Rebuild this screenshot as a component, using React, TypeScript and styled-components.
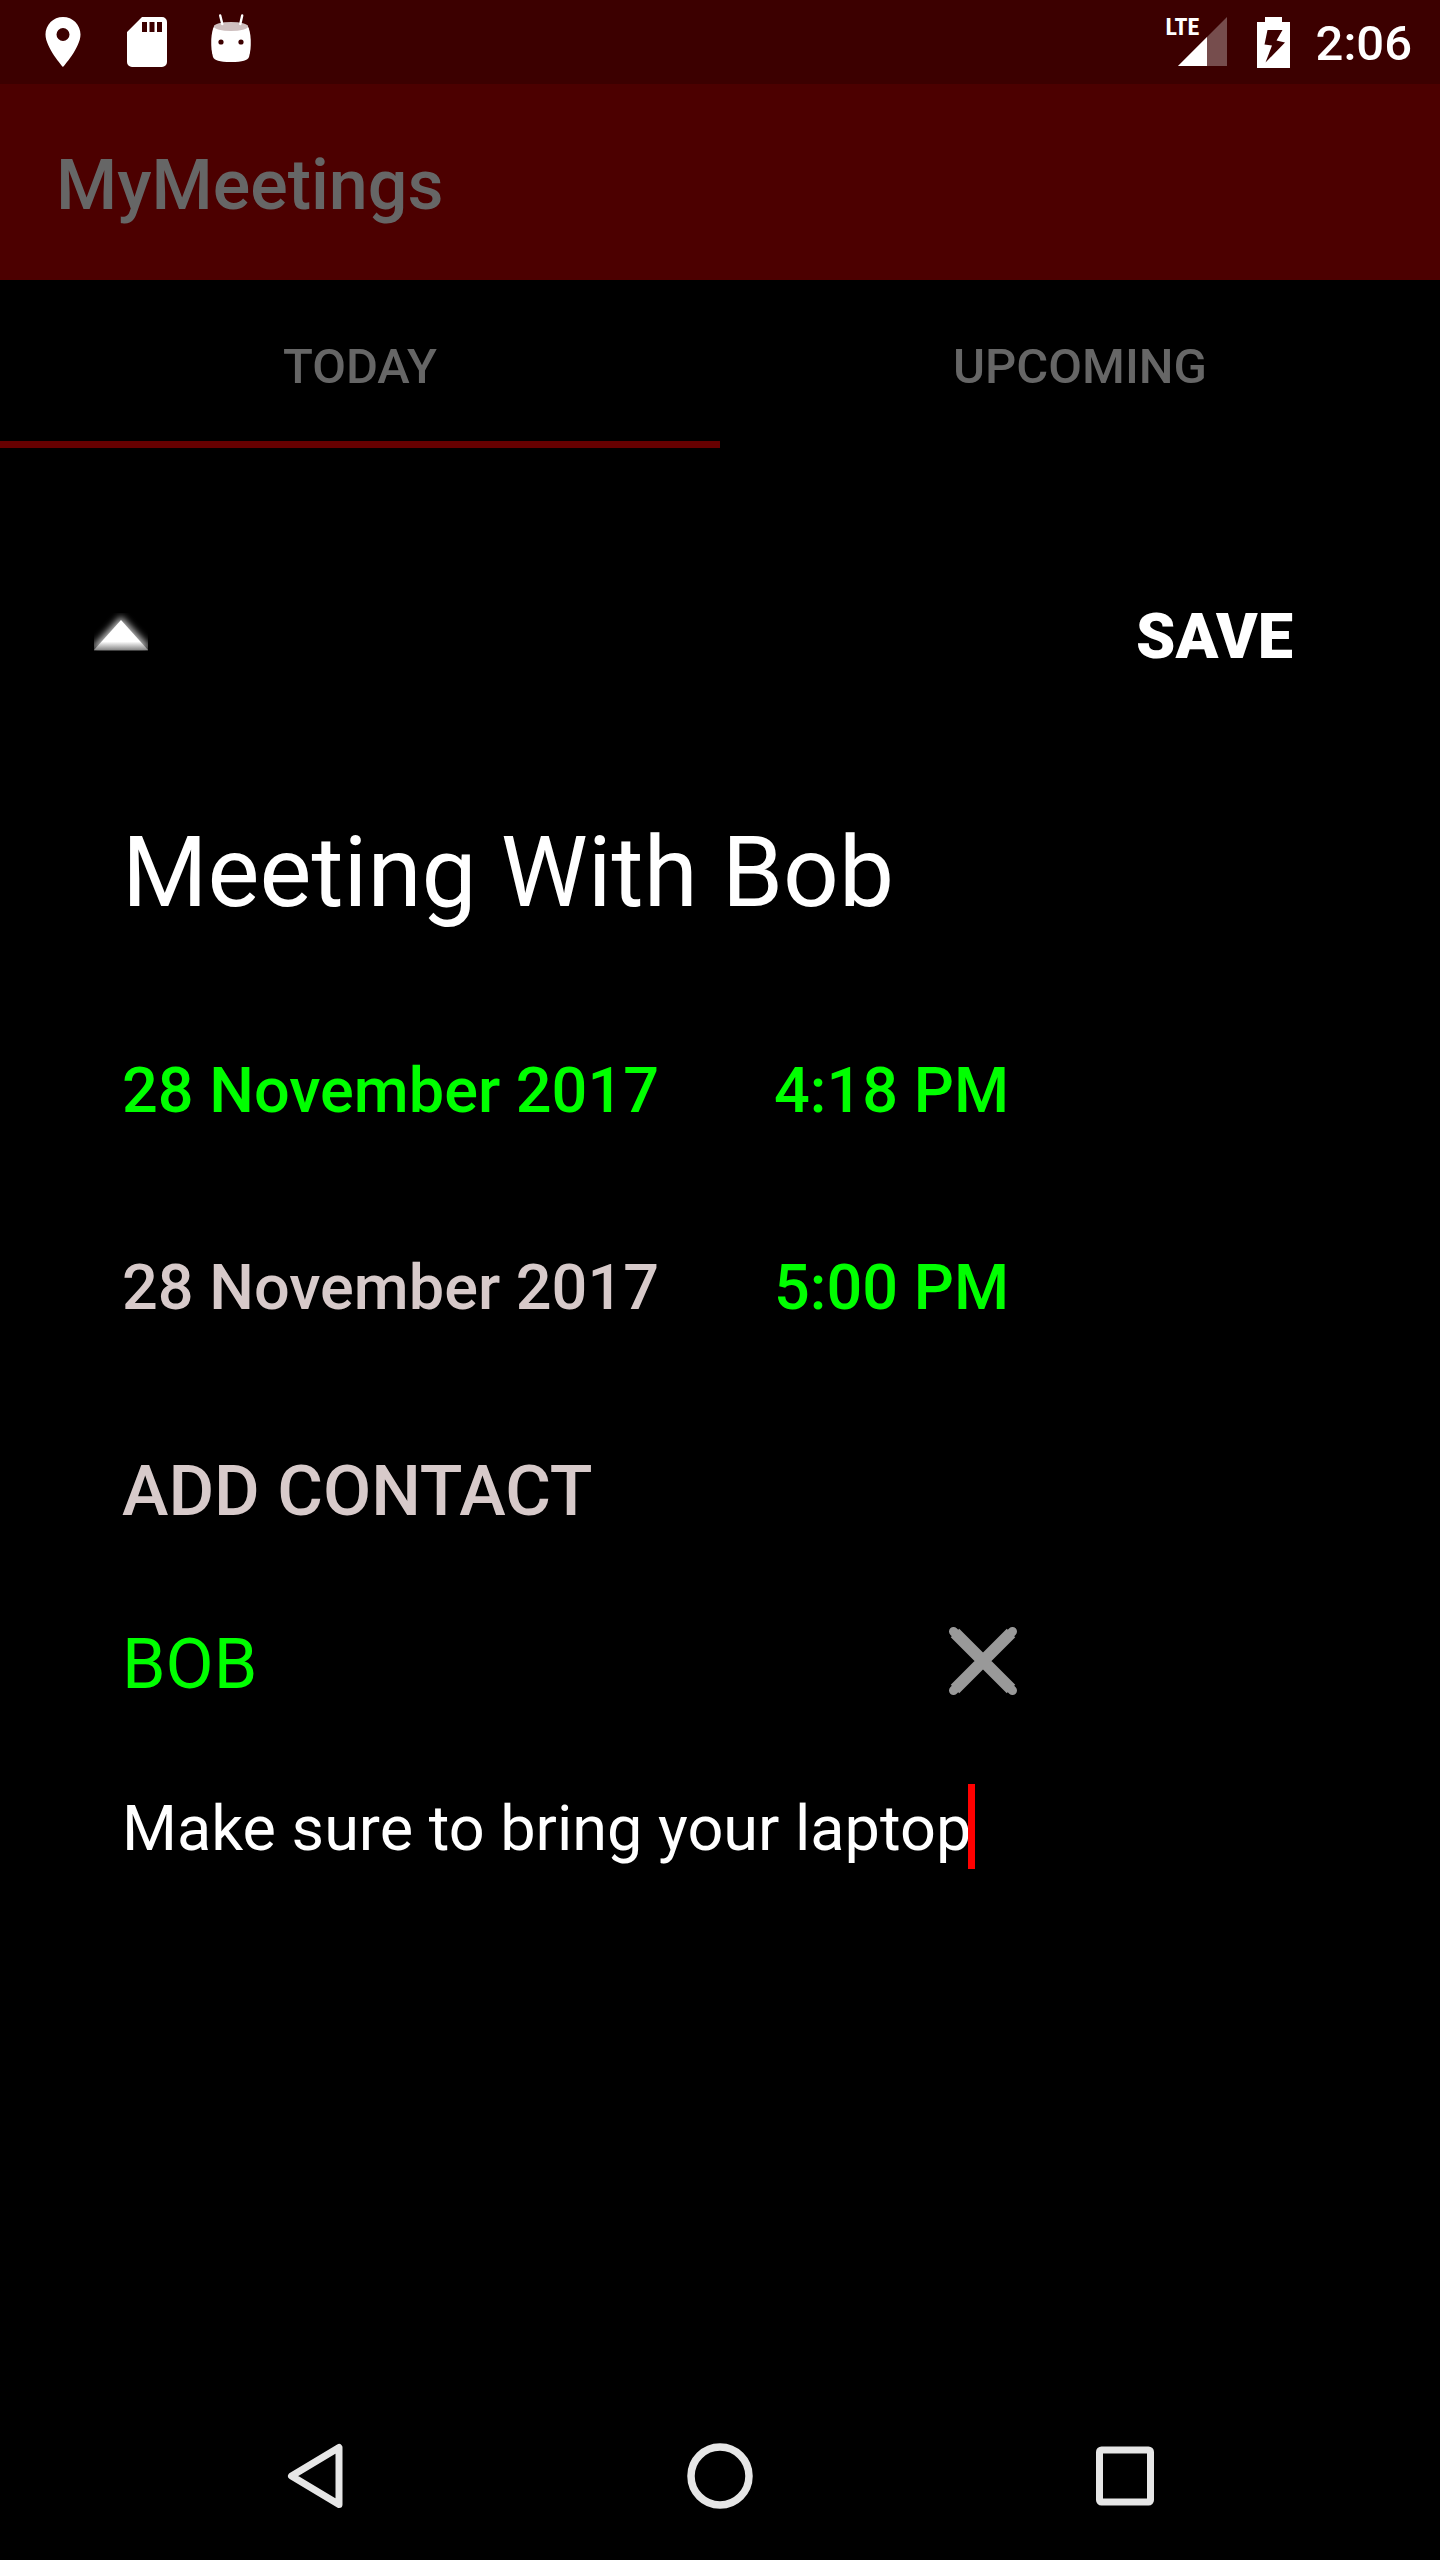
import React, { useState } from "react";
import styled, { createGlobalStyle } from "styled-components";

const GlobalStyle = createGlobalStyle`
  *, *::before, *::after { box-sizing: border-box; }
  body { margin: 0; background: #000; }
  button, input { margin: 0; padding: 0; border: 0; outline: 0; background: none; font: inherit; color: inherit; }
  button { cursor: pointer; text-align: left; }
  svg { display: block; flex: none; }
`;

const Screen = styled.div`
  display: flex;
  flex-direction: column;
  min-height: 100vh;
  background: #000;
  color: #fff;
  font-family: Roboto, "Noto Sans", sans-serif;
`;

const StatusBar = styled.header`
  display: flex;
  align-items: center;
  justify-content: space-between;
  height: 84px;
  padding: 0 28px 0 33px;
  background: #3c0000;
`;

const Notifications = styled.div`
  display: flex;
  gap: 24px;
`;

const SystemIcons = styled.div`
  display: flex;
  align-items: center;
  gap: 26px;
`;

const Signal = styled.div`
  position: relative;
  padding: 0 4px 0 12px;
`;

const Network = styled.span`
  position: absolute;
  left: 0;
  top: 0;
  font: 700 24px/20px "Roboto Condensed", "Liberation Sans Narrow", Roboto, sans-serif;
`;

const Clock = styled.time`
  padding-top: 4px;
  font-size: 49px;
  font-weight: 500;
  line-height: 60px;
`;

const AppBar = styled.div`
  display: flex;
  align-items: center;
  height: 196px;
  padding: 6px 56px 0;
  background: #4c0000;
`;

const AppTitle = styled.h1`
  margin: 0;
  color: #666;
  font-size: 70px;
  font-weight: 500;
  line-height: 84px;
`;

const Tabs = styled.nav`
  display: grid;
  grid-template-columns: 1fr 1fr;
`;

const Tab = styled.button<{ $active: boolean }>`
  height: 168px;
  padding-top: 12px;
  border-bottom: 7px solid ${(p) => (p.$active ? "#600" : "transparent")};
  color: #666;
  font-size: 49px;
  font-weight: 500;
  text-align: center;
`;

const Editor = styled.form`
  flex: 1;
  padding: 104px 122px 0;
`;

const EditorHeader = styled.div`
  display: flex;
  align-items: center;
  justify-content: space-between;
  height: 168px;
  padding-right: 25px;
  margin-left: -28px;
`;

const SaveButton = styled.button`
  padding-top: 2px;
  font-size: 63px;
  font-weight: 900;
  line-height: 74px;
`;

const TitleInput = styled.input`
  display: block;
  width: 100%;
  height: 272px;
  padding: 94px 0 62px;
  font-size: 98px;
  line-height: 116px;
`;

const DateRow = styled.div`
  display: grid;
  grid-template-columns: 652px auto;
  justify-content: start;
  align-items: center;
  height: 197px;
`;

const PickerButton = styled.button<{ $set: boolean }>`
  color: ${(p) => (p.$set ? "#0f0" : "#d7caca")};
  font-size: 63px;
  font-weight: 500;
  line-height: 74px;
`;

const AddContact = styled.button`
  display: block;
  height: 210px;
  color: #d7caca;
  font-size: 70px;
  font-weight: 500;
`;

const ContactRow = styled.div`
  display: flex;
  align-items: center;
  justify-content: space-between;
  max-width: 896px;
  height: 136px;
  color: #0f0;
  font-size: 70px;
`;

const RemoveButton = styled.button`
  padding-bottom: 6px;
`;

const MemoRow = styled.div`
  display: flex;
  align-items: flex-end;
  padding-top: 52px;
`;

const MemoInput = styled.input`
  field-sizing: content;
  height: 80px;
  font-size: 63px;
  line-height: 80px;
  caret-color: transparent;
`;

const Caret = styled.span`
  width: 7px;
  height: 85px;
  margin-left: -3px;
  background: #f00;
`;

const NavBar = styled.footer`
  display: flex;
  justify-content: center;
  gap: 125px;
  height: 168px;
`;

const NavButton = styled.button`
  display: flex;
  align-items: center;
  justify-content: center;
  width: 280px;
`;

const PinIcon = () => (
  <svg width="60" height="60" viewBox="0 0 24 24" fill="#fff">
    <path d="M12 2C8.13 2 5 5.13 5 9c0 5.25 7 13 7 13s7-7.75 7-13c0-3.87-3.13-7-7-7zm0 9.6a2.6 2.6 0 1 1 0-5.2 2.6 2.6 0 0 1 0 5.2z" />
  </svg>
);

const SdCardIcon = () => (
  <svg width="60" height="60" fill="#fff">
    <path
      fillRule="evenodd"
      d="M25 5H45a5 5 0 0 1 5 5V50a5 5 0 0 1-5 5H15a5 5 0 0 1-5-5V20zM25 10V20H30V10zM32.5 10V20H37.5V10zM40 10V20H45V10z"
    />
  </svg>
);

const MarshmallowIcon = () => (
  <svg width="60" height="60">
    <path
      fill="#fff"
      d="M13.5 13.5C9.5 20 9.300 36 12 45C13.500 48.500 18 50 30 50S46.500 48.500 48 45C50.700 36 50.500 20 46.500 13.500z"
    />
    <ellipse cx="30" cy="14.500" rx="17" ry="4.500" fill="#cebfbf" />
    <path d="M19.200 3.500L21.300 12M41.200 3.500L39.300 12" stroke="#fff" strokeWidth="2.400" strokeLinecap="round" />
    <circle cx="20" cy="30" r="2.600" fill="#3c0000" />
    <circle cx="40" cy="30" r="2.600" fill="#3c0000" />
  </svg>
);

const SignalIcon = () => (
  <svg width="49" height="50">
    <path d="M49 0V49H0z" fill="#fff" fillOpacity="0.3" />
    <path d="M29 20V49H0z" fill="#fff" />
  </svg>
);

const BatteryIcon = () => (
  <svg width="33" height="51">
    <path
      fill="#fff"
      fillRule="evenodd"
      d="M8 0H25V5H33V51H0V5H8zM10.500 13L7.500 27.500L15 28.500L8.500 45.500L28 25.500L19.500 23.500L25.500 13z"
    />
  </svg>
);

const CollapseIcon = () => (
  <svg width="54" height="46">
    <defs>
      <linearGradient id="fade" x1="0" y1="0" x2="0" y2="1">
        <stop offset="0.72" stopColor="#fff" />
        <stop offset="1" stopColor="#888" />
      </linearGradient>
      <filter id="glow" x="-30%" y="-50%" width="160%" height="200%">
        <feGaussianBlur stdDeviation="3.500" />
      </filter>
    </defs>
    <path d="M27 3L58 36H-4z" fill="#bbb" filter="url(#glow)" />
    <path d="M0 38H54V46H0z" fill="#000" />
    <path d="M27 7L54 37H0z" fill="url(#fade)" />
  </svg>
);

const RemoveIcon = () => (
  <svg width="70" height="70">
    <path d="M7 7L63 63M63 7L7 63" stroke="#999" strokeWidth="12" />
    <path d="M5.500 5.500L64.500 64.500M64.500 5.500L5.500 64.500" stroke="#999" strokeWidth="9" strokeLinecap="round" />
  </svg>
);

const BackIcon = () => (
  <svg width="56" height="66" fill="none" stroke="#e6e6e6" strokeWidth="7" strokeLinejoin="round">
    <path d="M52 4.500V61.500L4.500 33z" />
  </svg>
);

const HomeIcon = () => (
  <svg width="66" height="66" fill="none" stroke="#e6e6e6" strokeWidth="7.500">
    <circle cx="33" cy="33" r="29" />
  </svg>
);

const RecentsIcon = () => (
  <svg width="58" height="60" fill="none" stroke="#e6e6e6" strokeWidth="7">
    <rect x="3.500" y="4" width="51" height="52" rx="2" />
  </svg>
);

const tabs = ["TODAY", "UPCOMING"];

const schedule = [
  { name: "Start", date: "28 November 2017", time: "4:18 PM", dateSet: true },
  { name: "End", date: "28 November 2017", time: "5:00 PM", dateSet: false },
];

export default function App() {
  const [tab, setTab] = useState(tabs[0]);
  const [title, setTitle] = useState("Meeting With Bob");
  const [memo, setMemo] = useState("Make sure to bring your laptop");
  const [contacts, setContacts] = useState(["BOB"]);

  return (
    <Screen>
      <GlobalStyle />
      <StatusBar>
        <Notifications>
          <PinIcon />
          <SdCardIcon />
          <MarshmallowIcon />
        </Notifications>
        <SystemIcons>
          <Signal>
            <Network>LTE</Network>
            <SignalIcon />
          </Signal>
          <BatteryIcon />
          <Clock>2:06</Clock>
        </SystemIcons>
      </StatusBar>
      <AppBar>
        <AppTitle>MyMeetings</AppTitle>
      </AppBar>
      <Tabs>
        {tabs.map((name) => (
          <Tab key={name} type="button" $active={name === tab} onClick={() => setTab(name)}>
            {name}
          </Tab>
        ))}
      </Tabs>
      <Editor onSubmit={(e) => e.preventDefault()}>
        <EditorHeader>
          <button type="button" aria-label="Collapse">
            <CollapseIcon />
          </button>
          <SaveButton type="submit">SAVE</SaveButton>
        </EditorHeader>
        <TitleInput aria-label="Title" value={title} onChange={(e) => setTitle(e.target.value)} />
        {schedule.map((s) => (
          <DateRow key={s.name}>
            <PickerButton type="button" $set={s.dateSet}>
              {s.date}
            </PickerButton>
            <PickerButton type="button" $set>
              {s.time}
            </PickerButton>
          </DateRow>
        ))}
        <AddContact type="button">ADD CONTACT</AddContact>
        {contacts.map((c) => (
          <ContactRow key={c}>
            <span>{c}</span>
            <RemoveButton
              type="button"
              aria-label="Remove contact"
              onClick={() => setContacts(contacts.filter((x) => x !== c))}
            >
              <RemoveIcon />
            </RemoveButton>
          </ContactRow>
        ))}
        <MemoRow>
          <MemoInput aria-label="Memo" value={memo} onChange={(e) => setMemo(e.target.value)} />
          <Caret />
        </MemoRow>
      </Editor>
      <NavBar>
        <NavButton type="button" aria-label="Back">
          <BackIcon />
        </NavButton>
        <NavButton type="button" aria-label="Home">
          <HomeIcon />
        </NavButton>
        <NavButton type="button" aria-label="Recents">
          <RecentsIcon />
        </NavButton>
      </NavBar>
    </Screen>
  );
}
